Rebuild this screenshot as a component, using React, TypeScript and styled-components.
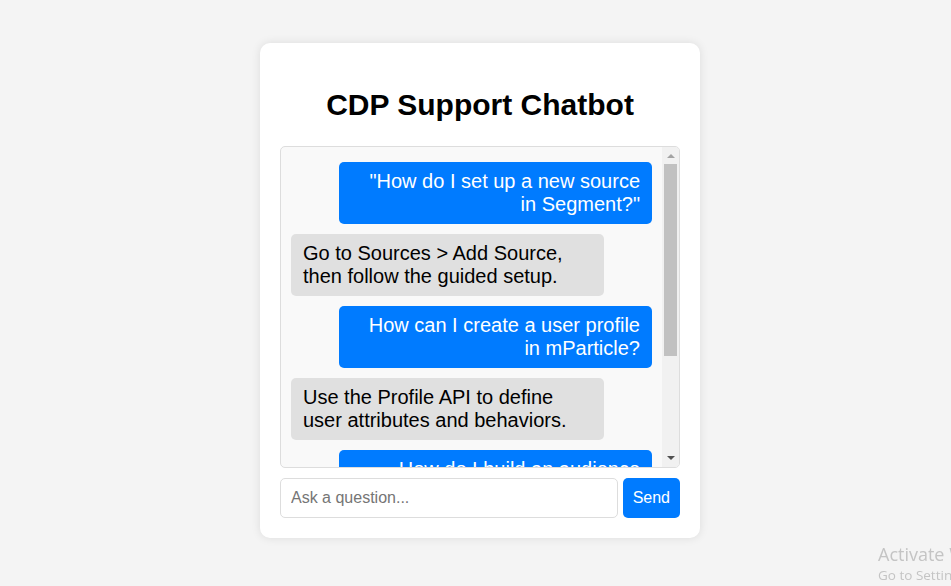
import React from "react";
import styled, { createGlobalStyle } from "styled-components";

const GlobalStyle = createGlobalStyle`
  html, body { margin: 0; padding: 0; }
  body {
    background: #f4f4f4;
    font-family: "Liberation Sans", Arial, sans-serif;
    overflow: hidden;
  }
`;

const Page = styled.div`
  min-height: 100vh;
  box-sizing: border-box;
  display: flex;
  justify-content: center;
  align-items: flex-start;
  padding: 43px 0 0 9px;
`;

const Card = styled.div`
  width: 400px;
  padding: 20px;
  background: #fff;
  border-radius: 10px;
  box-shadow: 0 0 10px rgba(0, 0, 0, 0.1);
`;

const Title = styled.h2`
  margin: 25px 0 24px;
  font-size: 30px;
  font-weight: bold;
  text-align: center;
  color: #000;
`;

const ChatFrame = styled.div`
  height: 320px;
  border: 1px solid #ddd;
  border-radius: 5px;
  background: #f9f9f9;
  display: flex;
  overflow: hidden;
`;

const Messages = styled.div`
  flex: 1;
  min-width: 0;
  padding: 10px;
  overflow: hidden;
  display: flex;
  flex-direction: column;
`;

const ScrollBar = styled.div`
  width: 17px;
  flex-shrink: 0;
  background: #f1f1f1;
  display: flex;
  flex-direction: column;
`;

const ArrowButton = styled.div`
  height: 17px;
  flex-shrink: 0;
  display: flex;
  align-items: center;
  justify-content: center;
`;

const Track = styled.div`
  flex: 1;
  display: flex;
  flex-direction: column;
`;

const Thumb = styled.div`
  height: 192px;
  margin: 0 2px;
  background: #c1c1c1;
`;

const Bubble = styled.div<{ $user?: boolean }>`
  flex-shrink: 0;
  max-width: 80%;
  margin: 5px 0;
  padding: 8px 12px;
  border-radius: 5px;
  font-size: 20px;
  line-height: 23px;
  align-self: ${(p) => (p.$user ? "flex-end" : "flex-start")};
  text-align: ${(p) => (p.$user ? "right" : "left")};
  background: ${(p) => (p.$user ? "#007bff" : "#e0e0e0")};
  color: ${(p) => (p.$user ? "#fff" : "#000")};
`;

const InputRow = styled.div`
  display: flex;
  gap: 5px;
  margin-top: 10px;
`;

const Input = styled.input`
  flex: 1;
  height: 40px;
  box-sizing: border-box;
  padding: 10px;
  border: 1px solid #ddd;
  border-radius: 5px;
  font-family: "Liberation Sans", Arial, sans-serif;
  font-size: 16px;
  outline: none;
  &::placeholder { color: #757575; }
`;

const SendButton = styled.button`
  height: 40px;
  padding: 0 10px;
  border: none;
  border-radius: 5px;
  background: #007bff;
  color: #fff;
  font-family: "Liberation Sans", Arial, sans-serif;
  font-size: 16px;
  cursor: pointer;
`;

const Watermark = styled.div`
  position: fixed;
  left: 878px;
  top: 542px;
  white-space: nowrap;
  color: #c4c4c4;
  font-family: "Open Sans", "Noto Sans", sans-serif;
  pointer-events: none;
`;

const WatermarkTitle = styled.div`
  font-size: 18px;
  line-height: 24px;
`;

const WatermarkSub = styled.div`
  font-size: 13.5px;
  line-height: 18px;
`;

const messages = [
  { user: true, text: '"How do I set up a new source in Segment?"' },
  { user: false, text: "Go to Sources > Add Source, then follow the guided setup." },
  { user: true, text: "How can I create a user profile in mParticle?" },
  { user: false, text: "Use the Profile API to define user attributes and behaviors." },
  { user: true, text: "How do I build an audience segment in Lytics?" },
  { user: false, text: "Open Audiences, click Create New, and set your segment rules." },
];

export default function App() {
  return (
    <>
      <GlobalStyle />
      <Page>
        <Card>
          <Title>CDP Support Chatbot</Title>
          <ChatFrame>
            <Messages>
              {messages.map((m, i) => (
                <Bubble key={i} $user={m.user}>
                  {m.text}
                </Bubble>
              ))}
            </Messages>
            <ScrollBar>
              <ArrowButton>
                <svg width="8" height="5" viewBox="0 0 8 5">
                  <path d="M0 5 L4 1 L8 5 Z" fill="#a3a3a3" />
                </svg>
              </ArrowButton>
              <Track>
                <Thumb />
              </Track>
              <ArrowButton>
                <svg width="8" height="5" viewBox="0 0 8 5">
                  <path d="M0 0 L4 4 L8 0 Z" fill="#505050" />
                </svg>
              </ArrowButton>
            </ScrollBar>
          </ChatFrame>
          <InputRow>
            <Input placeholder="Ask a question..." />
            <SendButton>Send</SendButton>
          </InputRow>
        </Card>
      </Page>
      <Watermark>
        <WatermarkTitle>Activate Windows</WatermarkTitle>
        <WatermarkSub>Go to Settings to activate Windows.</WatermarkSub>
      </Watermark>
    </>
  );
}
